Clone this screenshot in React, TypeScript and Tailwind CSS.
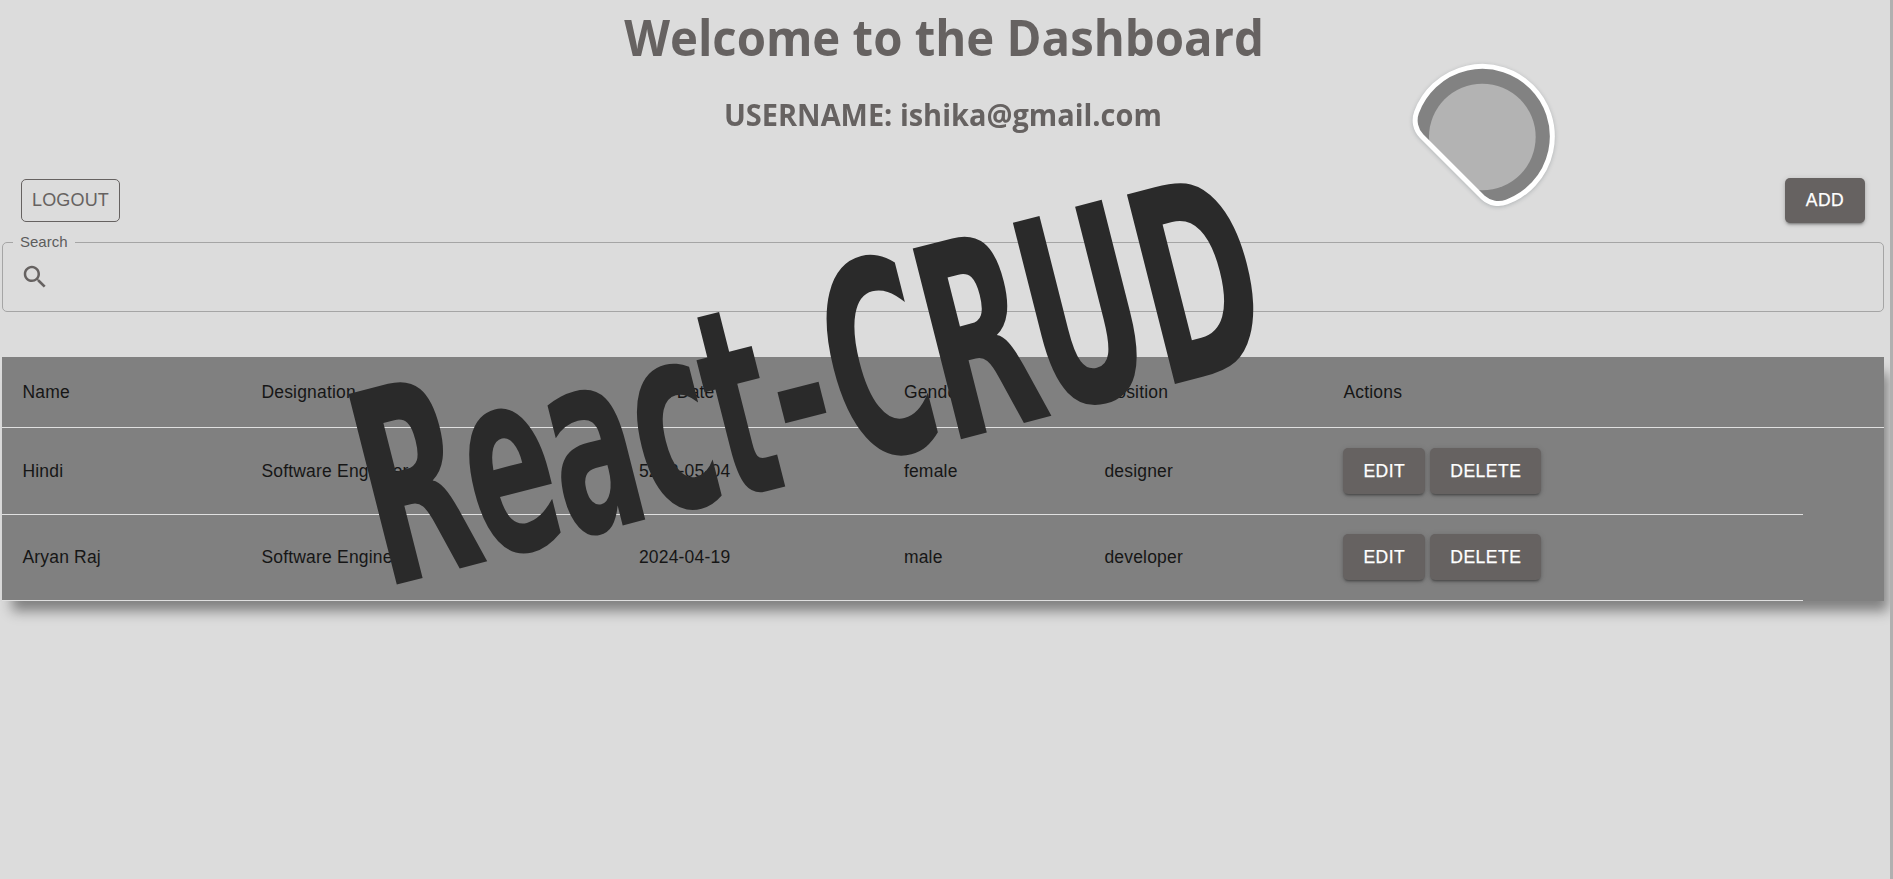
import React from "react";

type Person = {
  name: string;
  designation: string;
  joined: string;
  gender: string;
  position: string;
};

const people: Person[] = [
  { name: "Hindi", designation: "Software Engineer", joined: "5202-05-04", gender: "female", position: "designer" },
  { name: "Aryan Raj", designation: "Software Engineer", joined: "2024-04-19", gender: "male", position: "developer" },
];

const columns = "grid grid-cols-[239px_377.5px_265px_200.5px_239px_480px] items-center pl-[20.4px]";

// Each glyph's slot width and its own scale about the baseline.
const wordmark = [
  { char: "R", style: "w-[209.8px] [transform:scale(1.045,0.995)]" },
  { char: "e", style: "w-[170.1px] [transform:translateY(-1px)_scale(0.965,0.95)]" },
  { char: "a", style: "w-[174.1px] [transform:translateY(-1px)_scale(0.973,0.935)]" },
  { char: "c", style: "w-[156.4px] [transform:translateY(-1px)_scale(1,0.955)]" },
  { char: "t", style: "w-[128.4px] [transform:translateY(2px)_scale(0.95,0.975)]" },
  { char: "-", style: "w-[121.4px] [transform:translateY(-10.5px)_scale(1.02,0.83)]" },
  { char: "C", style: "w-[199.2px] [transform:translateY(-1.5px)_scale(1.015,0.998)]" },
  { char: "R", style: "w-[205.1px] [transform:scale(1.045,0.995)]" },
  { char: "U", style: "w-[233.1px] [transform:translateY(-2px)_scale(1.075,0.985)]" },
  { char: "D", style: "w-[200px] [transform:scale(1.065,0.99)]" },
];

function ActionButton({ label, className = "h-[46px]" }: { label: string; className?: string }) {
  return (
    <button
      className={`rounded-[5px] bg-[#666261] px-5 text-[17.5px] leading-[30px] font-normal tracking-[0.5px] text-white [-webkit-text-stroke:0.25px_white] shadow-[0_3px_2px_-2px_rgba(0,0,0,0.25),0_2px_3px_0_rgba(0,0,0,0.16),0_1px_6px_0_rgba(0,0,0,0.14)] ${className}`}
    >
      {label}
    </button>
  );
}

function SearchIcon() {
  return (
    <svg viewBox="0 0 24 24" className="size-[30px] fill-[#666261]">
      <path d="M15.5 14h-.79l-.28-.27C15.41 12.59 16 11.11 16 9.5 16 5.91 13.09 3 9.5 3S3 5.91 3 9.5 5.91 16 9.5 16c1.61 0 3.09-.59 4.23-1.57l.27.28v.79l5 4.99L20.49 19l-4.99-5zm-6 0C7.01 14 5 11.99 5 9.5S7.01 5 9.5 5 14 7.01 14 9.5 11.99 14 9.5 14z" />
    </svg>
  );
}

function Blob() {
  const outline =
    "M109.6 217.4 A210 210 0 1 1 380.3 486 A67.5 67.5 0 0 1 310.3 473.7 L124.3 287.7 A67.5 67.5 0 0 1 109.6 217.4 Z";
  return (
    <svg
      viewBox="60 30 510 510"
      className="absolute top-[50.3px] left-[1400px] h-[170px] w-[170px] drop-shadow-[0_1px_2px_rgba(0,20,30,0.2)]"
    >
      <defs>
        <clipPath id="blob-clip">
          <path d={outline} />
        </clipPath>
      </defs>
      <path d={outline} fill="#828282" />
      <circle cx="307" cy="291" r="160" fill="#b3b3b3" clipPath="url(#blob-clip)" />
      <path d={outline} fill="none" stroke="#fff" strokeWidth="15" />
    </svg>
  );
}

export default function App() {
  return (
    <div className="relative h-[879px] w-full overflow-hidden border-r-[3px] border-[#b0b0b0] bg-[#dcdcdc] font-['Liberation_Sans',sans-serif] text-[17.5px] text-[#161616]">
      <header className="flex h-[178px] flex-col items-center pr-[4px] font-['Open_Sans',sans-serif] font-bold text-[#666261]">
        <h1 className="mt-[2px] scale-x-[0.946] pl-[2px] text-[50px] leading-[70px] whitespace-nowrap">Welcome to the Dashboard</h1>
        <h2 className="mt-[23px] scale-x-[0.965] text-[30px] leading-[40px] whitespace-nowrap">USERNAME: ishika@gmail.com</h2>
      </header>

      <div className="flex h-[45px] justify-between pr-[25px] pl-[21px]">
        <button className="mt-px flex h-[43px] w-[99px] items-center justify-center rounded-[5px] border border-[#666261] text-[18px] tracking-[0.15px] text-[#666261]">
          LOGOUT
        </button>
        <ActionButton label="ADD" className="h-[45px] w-20 pb-[2px]" />
      </div>

      <fieldset className="mt-[10px] mr-[6px] ml-[2px] h-[79px] rounded-[5px] border border-[#a5a5a5] pl-[10px]">
        <legend className="h-[18px] w-[62px] px-[7px] text-[15px] leading-[18px] text-[#5c5c5c]">Search</legend>
        <div className="mt-[11px] pl-[7px]">
          <SearchIcon />
        </div>
      </fieldset>

      <main className="mt-[45px] mr-[6px] ml-[2px] h-[244px] bg-[#808080] tracking-[0.19px] shadow-[7px_13px_12px_-3px_rgba(0,0,0,0.42)]">
        <div className={`${columns} h-[71px] border-b border-[#e0e0e0]`}>
          <span>Name</span>
          <span>Designation</span>
          <span>Join Date</span>
          <span>Gender</span>
          <span>Position</span>
          <span>Actions</span>
        </div>
        {people.map((p) => (
          <div key={p.name} className={`${columns} h-[86.5px] w-[1801px] border-b border-[#e0e0e0]`}>
            <span>{p.name}</span>
            <span>{p.designation}</span>
            <span>{p.joined}</span>
            <span>{p.gender}</span>
            <span>{p.position}</span>
            <span className="flex gap-[5px]">
              <ActionButton label="EDIT" />
              <ActionButton label="DELETE" />
            </span>
          </div>
        ))}
      </main>

      <Blob />

      <div className="pointer-events-none absolute top-[365.8px] left-[328.3px] flex w-[1798px] origin-top-left [transform:matrix(0.4868,-0.1255,0.2464,0.973,0,0)] font-['DejaVu_Sans',sans-serif] text-[270px] leading-none font-bold whitespace-nowrap text-[#2a2a2a]">
        {wordmark.map(({ char, style }, i) => (
          <span key={i} className={`block shrink-0 origin-[0_228.4px] ${style}`}>
            {char}
          </span>
        ))}
      </div>
    </div>
  );
}
